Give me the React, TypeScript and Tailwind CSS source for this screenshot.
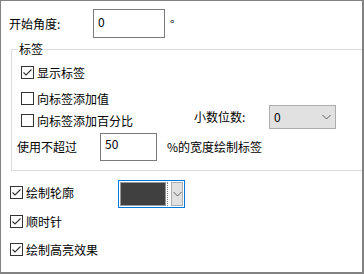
import React from "react";

const font = { fontFamily: '"Noto Sans CJK SC", "Microsoft YaHei", sans-serif' };

function Box({ checked }: { checked?: boolean }) {
  return (
    <span className="relative flex h-[13px] w-[13px] shrink-0 border border-[#333333] bg-white">
      {checked && (
        <svg width="11" height="11" viewBox="0 0 11 11" className="absolute left-0 top-0">
          <polyline points="1.5,5.5 4,8 9.5,2.5" fill="none" stroke="#333333" strokeWidth="1.1" />
        </svg>
      )}
    </span>
  );
}

function Check({ checked, label }: { checked?: boolean; label: string }) {
  return (
    <div className="flex h-[13px] items-center">
      <Box checked={checked} />
      <span className="ml-[3px] whitespace-nowrap text-[12px] leading-none text-black">{label}</span>
    </div>
  );
}

function Chevron() {
  return (
    <svg width="9" height="6" viewBox="0 0 9 6">
      <polyline points="0.5,1 4.5,5 8.5,1" fill="none" stroke="#606060" strokeWidth="1" />
    </svg>
  );
}

export default function App() {
  return (
    <div
      style={font}
      className="box-border h-[274px] w-[364px] overflow-hidden border-t border-l border-r-2 border-b-2 border-[#828282] bg-white text-black"
    >
      {/* Row 1 */}
      <div className="mt-[8px] flex h-[29px] items-center pl-[8px]">
        <span className="w-[84px] whitespace-nowrap text-[12px] leading-none">开始角度:</span>
        <div className="box-border h-[29px] w-[72px] border border-[#7a7a7a] bg-white pl-[4px] pt-[5px] text-[12px] leading-[14px]">
          0
        </div>
        <span className="ml-[5px] text-[12px] leading-none">°</span>
      </div>

      {/* Group */}
      <div className="relative mt-[11px] ml-[10px] box-border h-[122px] w-[370px] border border-[#dcdcdc]">
        <span className="absolute left-[6px] top-[-9px] bg-white px-[1px] text-[12px] leading-[16px]">标签</span>
        <div className="pl-[9px] pt-[16px]">
          <Check checked label="显示标签" />
          <div className="mt-[13px]">
            <Check label="向标签添加值" />
          </div>
          <div className="flex h-[24px] items-start">
            <div className="mt-[9px] w-[173px]">
              <Check label="向标签添加百分比" />
            </div>
            <span className="flex h-[24px] w-[75px] items-center whitespace-nowrap text-[12px] leading-none">
              小数位数:
            </span>
            <div className="box-border flex h-[24px] w-[67px] items-center justify-between border border-[#adadad] bg-[#e1e1e1] pl-[4px] pr-[4px] text-[12px] leading-none">
              <span>0</span>
              <Chevron />
            </div>
          </div>
        </div>
        <div className="mt-[4px] flex h-[28px] items-center pl-[5px]">
          <span className="w-[83px] whitespace-nowrap text-[12px] leading-none">使用不超过</span>
          <div className="box-border h-[28px] w-[57px] border border-[#7a7a7a] bg-white pl-[4px] pt-[3px] text-[12px] leading-[14px]">
            50
          </div>
          <span className="ml-[10px] whitespace-nowrap text-[12px] leading-none">%的宽度绘制标签</span>
        </div>
      </div>

      {/* Bottom rows */}
      <div className="pl-[9px]">
        <div className="mt-[9px] flex h-[28px] items-start">
          <div className="mt-[6px] w-[108px]">
            <Check checked label="绘制轮廓" />
          </div>
          <div className="box-border flex h-[28px] w-[67px] border border-[#0078d7] bg-white p-[1px]">
            <div className="box-border h-full w-[47px] border border-[#999999] bg-[#404040]" />
            <div className="ml-[1px] h-full w-0 border-l border-dotted border-[#808080]" />
            <div className="ml-[3px] box-border flex h-full w-[12px] items-center justify-center border border-[#adadad] bg-[#e1e1e1]">
              <Chevron />
            </div>
          </div>
        </div>
        <div className="mt-[7px]">
          <Check checked label="顺时针" />
        </div>
        <div className="mt-[15px]">
          <Check checked label="绘制高亮效果" />
        </div>
      </div>
    </div>
  );
}
